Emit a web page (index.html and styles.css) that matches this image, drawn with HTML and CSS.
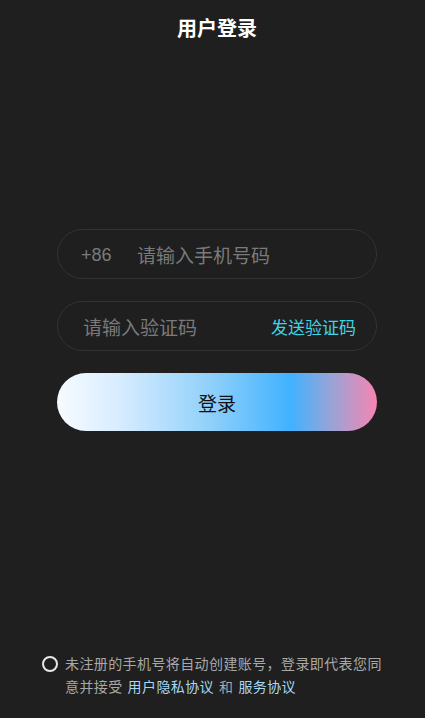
FILE: index.html
```html
<!DOCTYPE html>
<html lang="zh-CN">
<head>
<meta charset="utf-8">
<title>用户登录</title>
<link rel="stylesheet" href="styles.css">
</head>
<body>
<div class="page">
  <div class="content">
    <h1 class="title">用户登录</h1>
    <form class="form">
      <div class="field">
        <span class="prefix">+86</span>
        <input class="input" type="tel" placeholder="请输入手机号码">
      </div>
      <div class="field field-code">
        <input class="input" type="text" placeholder="请输入验证码">
        <span class="send">发送验证码</span>
      </div>
      <button class="login" type="button">登录</button>
    </form>
  </div>
  <div class="footer">
    <span class="radio"></span>
    <div class="agree">
      <div class="line">未注册的手机号将自动创建账号，登录即代表您同</div>
      <div class="line line-2">
        <span class="plain">意并接受</span>
        <a class="link">用户隐私协议</a>
        <span class="plain">和</span>
        <a class="link">服务协议</a>
      </div>
    </div>
  </div>
</div>
</body>
</html>
```
FILE: styles.css
```css
* { box-sizing: border-box; }
html, body {
  margin: 0;
  padding: 0;
  background: #1f1f1f;
  font-family: "Noto Sans CJK SC", "Noto Sans", sans-serif;
}
.page {
  height: 718px;
  display: flex;
  flex-direction: column;
}
.content {
  margin-left: 57px;
  width: 320px;
}
.title {
  margin: 0;
  height: 56px;
  line-height: 56px;
  text-align: center;
  font-size: 20px;
  font-weight: 700;
  color: #ffffff;
}
.form {
  margin-top: 173px;
  display: flex;
  flex-direction: column;
  gap: 22px;
}
.field {
  height: 50px;
  border: 1px solid #333333;
  border-radius: 25px;
  background: #1f1f1f;
  display: flex;
  align-items: center;
  padding: 0 20px 0 23px;
}
.prefix {
  font-family: "Liberation Sans", Arial, sans-serif;
  font-size: 18px;
  line-height: 22px;
  padding-top: 2px;
  color: #7a7a7a;
  width: 56px;
  flex: none;
}
.input {
  flex: 1;
  min-width: 0;
  border: none;
  outline: none;
  background: transparent;
  font-family: "Noto Sans CJK SC", sans-serif;
  font-size: 19px;
  color: #dddddd;
  padding: 0;
}
.input::placeholder { color: #7a7a7a; }
.field-code { padding-left: 25px; }
.send {
  flex: none;
  font-size: 17px;
  color: #3fd3e6;
}
.login {
  height: 58px;
  border: none;
  border-radius: 29px;
  background: linear-gradient(90deg, #f7fbff 0%, #d6ecff 20%, #90d0fa 48%, #40b2ff 73%, #9ba3d6 86%, #f685b1 100%);
  font-family: "Noto Sans CJK SC", sans-serif;
  font-size: 19px;
  color: #111111;
  cursor: pointer;
}
.footer {
  margin-top: auto;
  padding: 0 36px 20px 42px;
  display: flex;
  align-items: flex-start;
  gap: 7px;
}
.radio {
  flex: none;
  width: 16px;
  height: 16px;
  margin-top: 4px;
  border: 2px solid #e8e8e8;
  border-radius: 50%;
}
.agree {
  display: flex;
  flex-direction: column;
  font-size: 14px;
  line-height: 23px;
  letter-spacing: 0.4px;
  color: #a8a8a8;
}
.line {
  white-space: nowrap;
}
.line-2 {
  display: flex;
  gap: 5px;
}
.link {
  color: #a6d8f2;
}
```
